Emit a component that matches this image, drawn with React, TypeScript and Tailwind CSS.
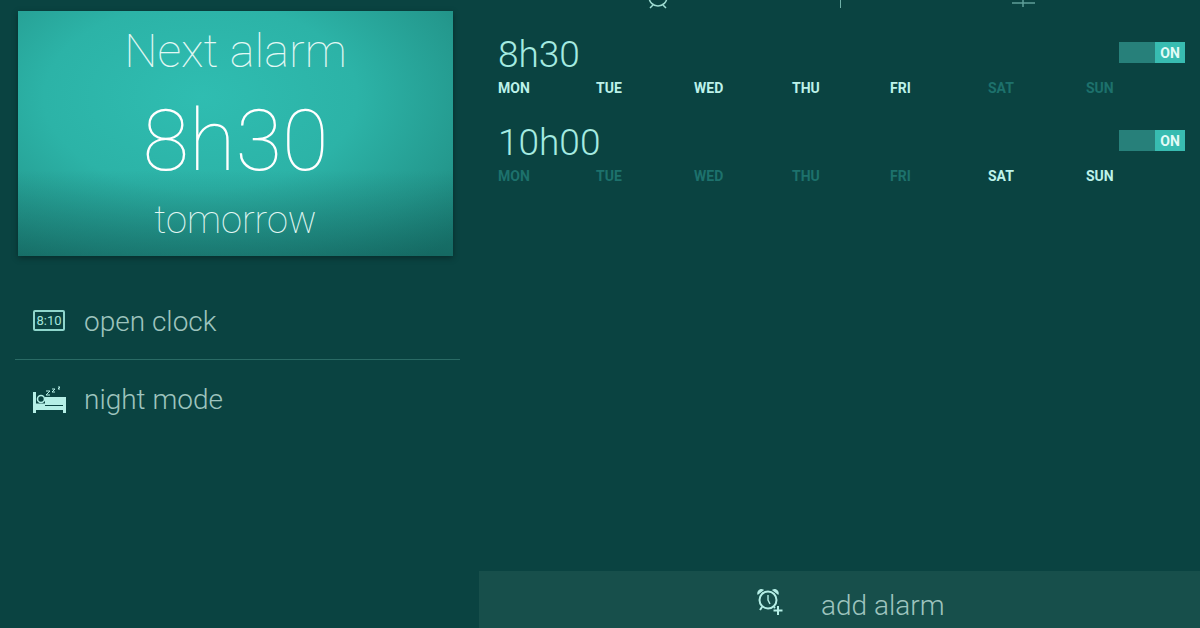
const days = ['MON', 'TUE', 'WED', 'THU', 'FRI', 'SAT', 'SUN'];

function ClockIcon() {
  return (
    <div className="w-[32px] h-[21px] border-2 border-[#8fd6cc] rounded-[2px] flex items-center justify-center text-[13px] leading-none font-normal text-[#a5e4da]">
      8:10
    </div>
  );
}

function BedIcon() {
  return (
    <svg width="33" height="27" viewBox="0 0 33 27" fill="none">
      <path d="M0 6h3v21H0z" fill="#b5efe6" />
      <path d="M30 11h3v16h-3z" fill="#b5efe6" />
      <path d="M3 20h27v4H3z" fill="#b5efe6" />
      <path d="M12 11h18v8H12z" fill="#b5efe6" />
      <circle cx="8" cy="13" r="3.500" stroke="#b5efe6" strokeWidth="1.600" />
      <path d="M3 17.500h9V20H3z" fill="#b5efe6" />
      <path d="M13 5h4l-4 4h4M19 3h3l-3 3h3M25 1h2l-2 2h2" stroke="#b5efe6" strokeWidth="1" />
    </svg>
  );
}

function AddAlarmIcon() {
  return (
    <svg width="28" height="30" viewBox="0 0 28 30" fill="none" stroke="#b5efe6">
      <circle cx="11" cy="13" r="8.500" strokeWidth="2" />
      <path d="M11 8v5l2 4" strokeWidth="1.400" />
      <path d="M1 7a3.500 3.500 0 0 1 5-4zM16 3a3.500 3.500 0 0 1 5 4z" fill="#b5efe6" strokeWidth="1.200" />
      <path d="M5 20l-2 3M17 20l1 1" strokeWidth="2" />
      <path d="M21 19v9M16.500 23.500h9" strokeWidth="2" />
    </svg>
  );
}

function Toggle() {
  return (
    <div className="w-[66px] h-[21px] bg-[#27807a] flex justify-end">
      <div className="w-[30px] bg-[#38bcb1] flex items-center justify-center text-[14px] font-bold leading-none text-[#e4fbf7]">
        ON
      </div>
    </div>
  );
}

function AlarmRow({ time, on }: { time: string; on: string[] }) {
  return (
    <div className="h-[88px] pl-[19px] pr-[15px] pt-[3px]">
      <div className="flex items-start justify-between">
        <div className="text-[37px] leading-[43px] font-light text-[#a5ebe1]">{time}</div>
        <div className="pt-[9px]">
          <Toggle />
        </div>
      </div>
      <div className="flex mt-[3px]">
        {days.map((d) => (
          <div
            key={d}
            className={
              'w-[98px] text-[14px] leading-[18px] font-bold ' +
              (on.includes(d) ? 'text-[#bdf2ea]' : 'text-[#1d716c]')
            }
          >
            {d}
          </div>
        ))}
      </div>
    </div>
  );
}

export default function App() {
  return (
    <div className="w-[1200px] h-[628px] overflow-hidden flex bg-[#0a4341] font-['Roboto',sans-serif]">
      {/* left column */}
      <div className="w-[479px] shrink-0 pt-[11px]">
        <div className="ml-[18px] w-[435px] h-[245px] flex flex-col items-center shadow-[0_2px_6px_rgba(0,0,0,0.35)] bg-[linear-gradient(to_top,rgba(10,67,65,0.4),rgba(10,67,65,0)_35%),radial-gradient(ellipse_80%_85%_at_42%_35%,#2fbdb1_0%,#2cb3a7_45%,#24998e_78%,#1c8379_100%)] text-[#e3f8f4]">
          <div className="mt-[10px] text-[47px] leading-[60px] font-thin">Next alarm</div>
          <div className="mt-[10px] text-[85px] leading-[100px] font-thin text-white">8h30</div>
          <div className="mt-[6px] text-[38px] leading-[46px] font-thin">tomorrow</div>
        </div>

        <div className="mt-[38px] ml-[15px] w-[445px]">
          <div className="h-[66px] flex items-start pl-[18px] pt-[8px] border-b border-[#2a6b65]">
            <div className="pt-[8px] w-[51px]">
              <ClockIcon />
            </div>
            <div className="text-[28px] leading-[40px] font-light text-[#9ec4be]">open clock</div>
          </div>
          <div className="flex items-start pl-[18px] pt-[20px]">
            <div className="w-[51px] pt-[6px]">
              <BedIcon />
            </div>
            <div className="text-[28px] leading-[40px] font-light text-[#9ec4be]">night mode</div>
          </div>
        </div>
      </div>

      {/* right column */}
      <div className="flex-1 flex flex-col">
        <div className="h-[10px] relative overflow-hidden shrink-0">
          <svg className="absolute left-[168px] top-[-14px]" width="24" height="24" viewBox="0 0 24 24" fill="none" stroke="#9fdcd2" strokeWidth="1.500">
            <circle cx="11" cy="11" r="9" />
            <path d="M3 22l3-3M19 22l-3-3" />
          </svg>
          <div className="absolute left-[361px] top-0 w-px h-[8px] bg-[#6fb0a8]" />
          <svg className="absolute left-[533px] top-0" width="26" height="10" viewBox="0 0 26 10" fill="none" stroke="#5f9f98" strokeWidth="1.500">
            <path d="M0 3h23M11 0v7" />
          </svg>
        </div>

        <div className="pt-[20px] flex-1">
          <AlarmRow time="8h30" on={['MON', 'TUE', 'WED', 'THU', 'FRI']} />
          <AlarmRow time="10h00" on={['SAT', 'SUN']} />
        </div>

        <div className="h-[57px] shrink-0 bg-[#174f4b] flex items-center pl-[278px]">
          <div className="w-[64px] mt-[4px]">
            <AddAlarmIcon />
          </div>
          <div className="text-[28px] leading-[40px] font-light text-[#9ec4be] mt-[12px]">add alarm</div>
        </div>
      </div>
    </div>
  );
}
